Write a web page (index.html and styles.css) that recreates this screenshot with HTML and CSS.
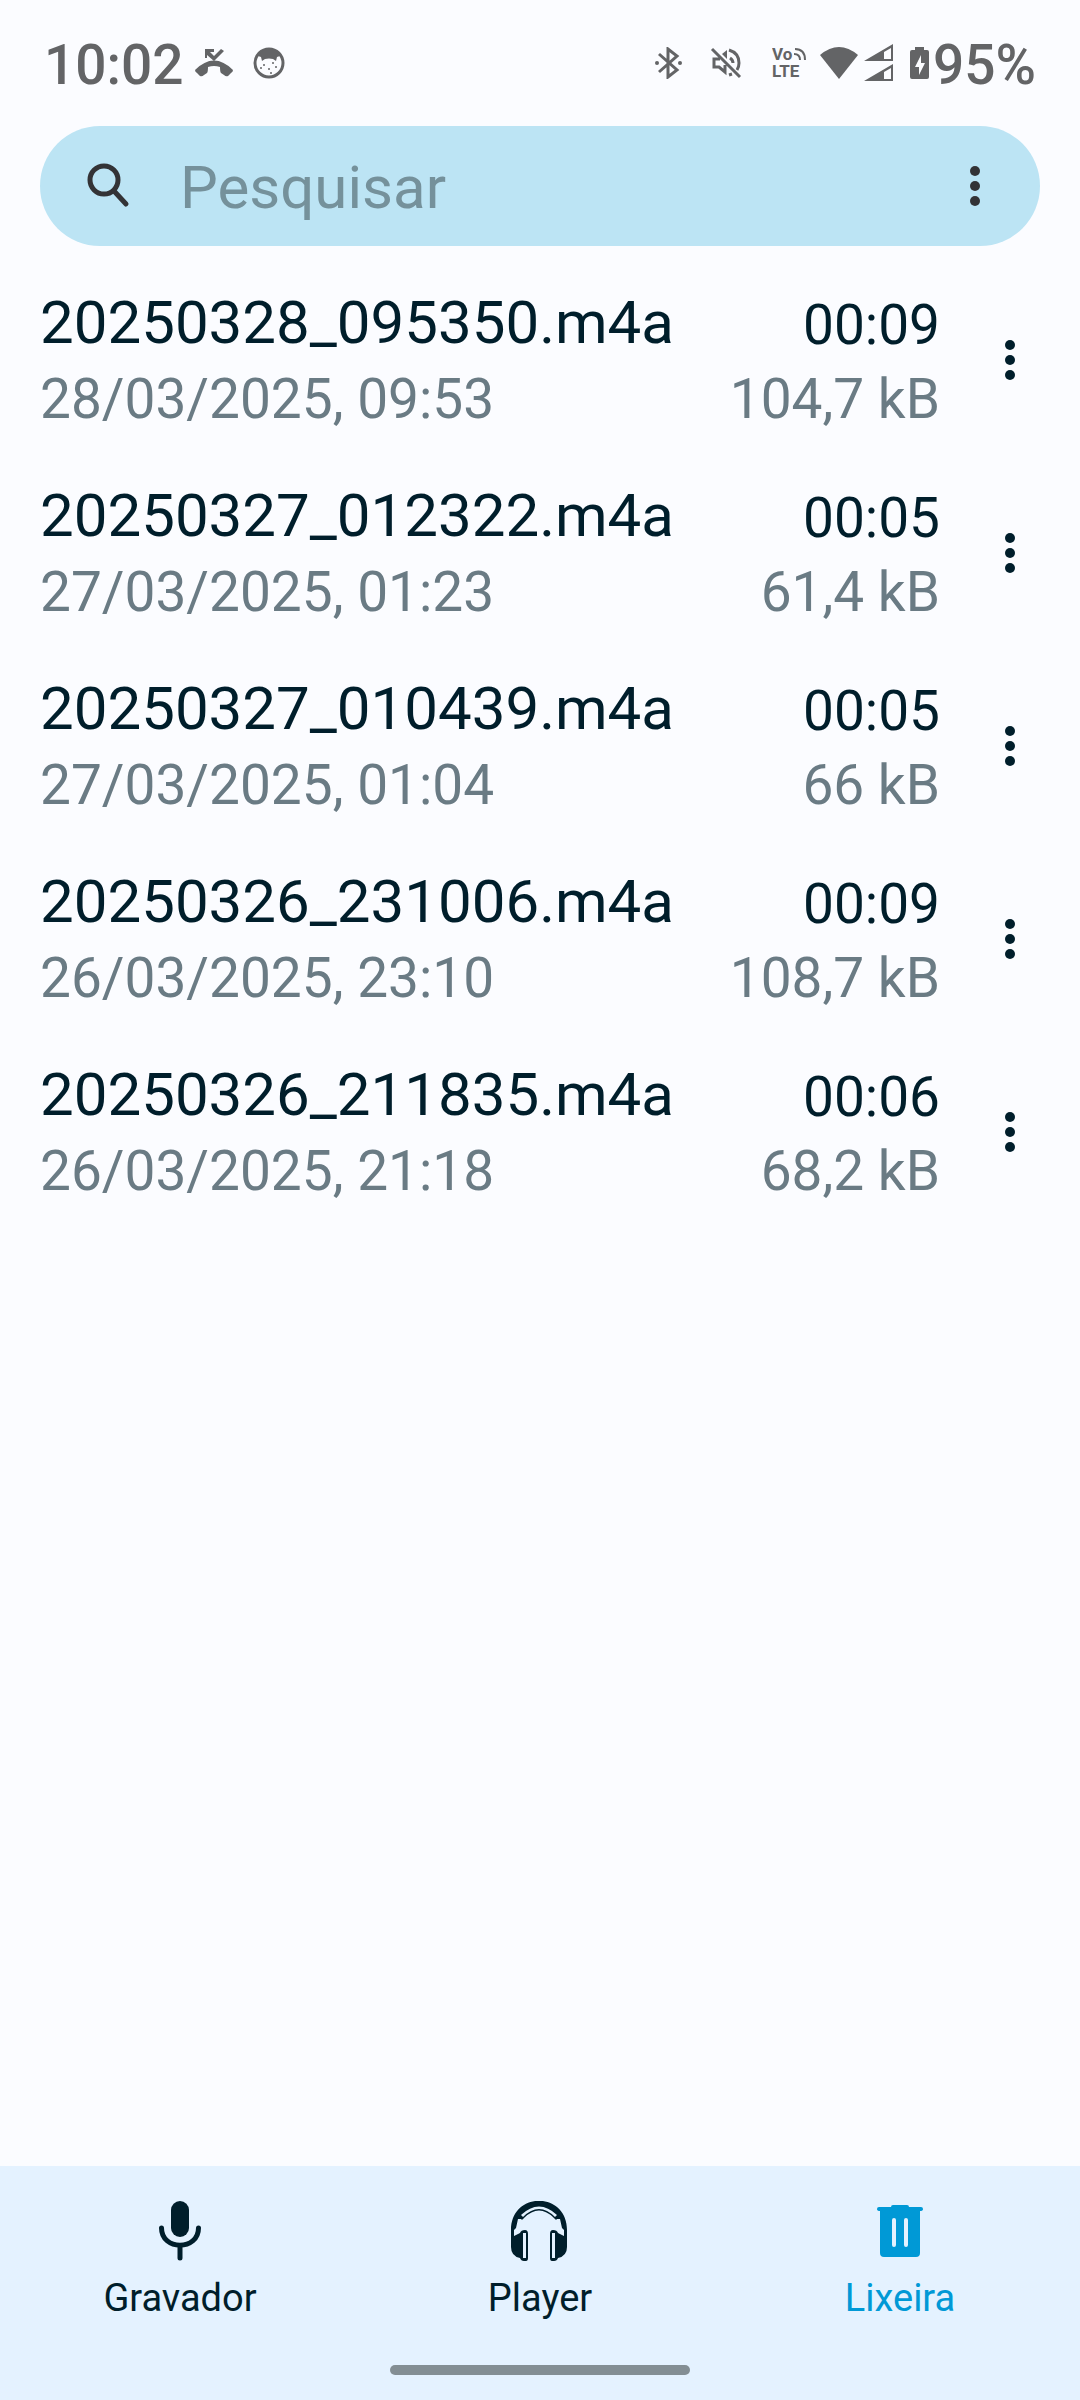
FILE: index.html
```html
<!DOCTYPE html>
<html lang="pt-BR">
<head>
<meta charset="utf-8">
<meta name="viewport" content="width=device-width, initial-scale=1">
<title>Lixeira</title>
<link rel="stylesheet" href="styles.css">
</head>
<body>
<svg class="sprite" aria-hidden="true">
  <symbol id="dots" viewBox="0 0 10 40"><circle cx="5" cy="5" r="5"/><circle cx="5" cy="20" r="5"/><circle cx="5" cy="35" r="5"/></symbol>
</svg>

<header class="status">
  <div class="status-group">
    <span class="status-text">10:02</span>
    <svg class="call" width="38" height="32" viewBox="0 0 38 32" aria-label="Chamada perdida"><path d="M0 23Q19 4 38 23Q38 25 36 26L33 29Q31 30 29 28L26 26Q25 25 25 20Q19 18 13 20Q13 25 12 26L9 28Q7 30 5 29L2 26Q0 25 0 23Z"/><path d="M10 2H19V5H15L19 9L26 2L29 4L19 14L12 8V11H10Z"/></svg>
    <svg class="face" width="32" height="32" viewBox="0 0 32 32" aria-label="Notificação"><circle cx="16" cy="16" r="14" fill="none" stroke="currentColor" stroke-width="3"/><path d="M5 9Q9 2 16 2Q23 2 27 9L24 10L23 14L20 12Q16 11 12 12L9 14L8 10Z"/><g><circle cx="11" cy="18" r="1"/><circle cx="20" cy="16" r="1"/><circle cx="8" cy="21" r="1"/><circle cx="16" cy="22" r="1"/><circle cx="23" cy="20" r="1"/><circle cx="18" cy="26" r="1"/></g></svg>
  </div>
  <div class="status-group">
    <svg class="bluetooth" width="27" height="32" viewBox="0 0 27 32" aria-label="Bluetooth"><path d="M4 7L22 23L13 30V2L22 9L4 25" fill="none" stroke="currentColor" stroke-width="3"/><circle cx="2" cy="16" r="2"/><circle cx="25" cy="16" r="2"/></svg>
    <svg class="mute" width="32" height="32" viewBox="0 0 32 32" aria-label="Sem som"><path d="M2 2L30 30M10 12H4V20H9L15 25V18M19 3Q29 6 29 16Q29 20 27 23M19 28L22 27M20 11Q23 13 23 16" fill="none" stroke="currentColor" stroke-width="3"/><path d="M12 7L17 3V12Z"/></svg>
    <svg class="volte" width="34" height="44" viewBox="0 0 34 44" aria-label="VoLTE"><text x="0" y="19">Vo</text><text x="0" y="36">LTE</text><path d="M23 8Q33 8 33 19M22 13Q28 13 28 19" fill="none" stroke="currentColor" stroke-width="2"/></svg>
    <svg class="wifi" width="38" height="32" viewBox="0 0 38 32" aria-label="Wi-Fi"><path d="M0 8Q19-8 38 8L19 32Z"/></svg>
    <svg class="signal" width="30" height="38" viewBox="0 0 30 38" aria-label="Sinal"><path fill-rule="evenodd" d="M0 17L29 0V17ZM20 8V15H27V4ZM0 37L29 20V37ZM20 28V35H27V24Z"/></svg>
    <svg class="battery" width="19" height="32" viewBox="0 0 19 32" aria-label="Bateria carregando"><path fill-rule="evenodd" d="M5 0H14V3H17Q19 3 19 5V30Q19 32 17 32H2Q0 32 0 30V5Q0 3 2 3H5ZM11 8L5 20H9V28L15 16H11Z"/></svg>
    <span class="status-text">95%</span>
  </div>
</header>

<form class="search" role="search">
  <label class="search-label" for="q" aria-label="Pesquisar"><svg width="44" height="46" viewBox="0 0 44 46"><ellipse cx="17" cy="17" rx="14" ry="14" fill="none" stroke="currentColor" stroke-width="5"/><path d="M27 28L39 41" fill="none" stroke="currentColor" stroke-width="5" stroke-linecap="round"/></svg></label>
  <input id="q" class="search-input" type="text" placeholder="Pesquisar">
  <button class="more" type="button" aria-label="Mais opções"><svg width="10" height="40"><use href="#dots"/></svg></button>
</form>

<main class="main">
  <ul class="list">
    <li class="row"><div class="info"><span class="name">20250328_095350.m4a</span><span class="sub">28/03/2025, 09:53</span></div><div class="meta"><span class="time">00:09</span><span class="sub">104,7 kB</span></div><button class="more" type="button" aria-label="Opções"><svg width="10" height="40"><use href="#dots"/></svg></button></li>
    <li class="row"><div class="info"><span class="name">20250327_012322.m4a</span><span class="sub">27/03/2025, 01:23</span></div><div class="meta"><span class="time">00:05</span><span class="sub">61,4 kB</span></div><button class="more" type="button" aria-label="Opções"><svg width="10" height="40"><use href="#dots"/></svg></button></li>
    <li class="row"><div class="info"><span class="name">20250327_010439.m4a</span><span class="sub">27/03/2025, 01:04</span></div><div class="meta"><span class="time">00:05</span><span class="sub">66 kB</span></div><button class="more" type="button" aria-label="Opções"><svg width="10" height="40"><use href="#dots"/></svg></button></li>
    <li class="row"><div class="info"><span class="name">20250326_231006.m4a</span><span class="sub">26/03/2025, 23:10</span></div><div class="meta"><span class="time">00:09</span><span class="sub">108,7 kB</span></div><button class="more" type="button" aria-label="Opções"><svg width="10" height="40"><use href="#dots"/></svg></button></li>
    <li class="row"><div class="info"><span class="name">20250326_211835.m4a</span><span class="sub">26/03/2025, 21:18</span></div><div class="meta"><span class="time">00:06</span><span class="sub">68,2 kB</span></div><button class="more" type="button" aria-label="Opções"><svg width="10" height="40"><use href="#dots"/></svg></button></li>
  </ul>
</main>

<footer class="footer">
  <nav class="tabs">
    <a class="tab" href="#gravador"><svg width="60" height="60" viewBox="0 0 60 60"><rect x="21" y="0" width="18" height="36" rx="9"/><path d="M11.500 27C11.500 50 48.500 50 48.500 27M30 46V57" fill="none" stroke="currentColor" stroke-width="5" stroke-linecap="round"/></svg><span>Gravador</span></a>
    <a class="tab" href="#player"><svg width="60" height="60" viewBox="0 0 60 60"><path fill-rule="evenodd" d="M1 29C1-10 57-10 57 29V46Q57 55 48 57Q47 60 44 60H42Q40 60 40 57V33Q40 29 43 29Q47 29 48 32L54 35V29L52 27L50 18H47Q46 20 44 17Q29 2 14 17Q12 20 11 18H8L6 27L4 29V35L10 32Q11 29 15 29Q18 29 18 33V57Q18 60 16 60H14Q11 60 10 57Q1 55 1 46ZM11 14L13 16Q29 0 45 16L47 14Q29-3 11 14ZM13 32V57H16V32ZM42 32V57H45V32Z"/></svg><span>Player</span></a>
    <a class="tab active" href="#lixeira" aria-current="page"><svg width="60" height="60" viewBox="0 0 60 60"><path fill-rule="evenodd" d="M23 4H37Q39 4 39 6H51Q53 6 53 8Q53 10 50 10V52Q50 56 46 56H14Q10 56 10 52V10Q7 10 7 8Q7 6 9 6H21Q21 4 23 4ZM24 17Q22 17 22 19V44Q22 46 24 46Q26 46 26 44V19Q26 17 24 17ZM36 17Q34 17 34 19V44Q34 46 36 46Q38 46 38 44V19Q38 17 36 17Z"/></svg><span>Lixeira</span></a>
  </nav>
  <div class="home-bar"></div>
</footer>
</body>
</html>
```
FILE: styles.css
```css
* { box-sizing: border-box; }

body {
  margin: 0;
  min-height: 100vh;
  display: flex;
  flex-direction: column;
  background: #fbfcff;
  color: #001e2b;
  font-family: Roboto, "Liberation Sans", sans-serif;
}

svg { display: block; fill: currentColor; flex: none; }
.sprite { position: absolute; width: 0; height: 0; }

.status {
  height: 126px;
  padding: 0 44px;
  display: flex;
  align-items: center;
  justify-content: space-between;
  color: #636466;
}
.status-group { display: flex; align-items: center; }
.status-text { font-size: 55px; line-height: 64px; font-weight: 500; padding-top: 4px; }
.call { margin-left: 11px; }
.face { margin-left: 20px; }
.mute { margin-left: 28px; }
.volte { margin-left: 30px; font: 700 17px Roboto, sans-serif; }
.wifi { margin-left: 14px; }
.signal { margin-left: 6px; }
.battery { margin: 0 4px 0 16px; }

.search {
  height: 120px;
  margin: 0 40px;
  padding: 0 20px 0 47px;
  display: flex;
  align-items: center;
  border-radius: 60px;
  background: #bce4f4;
  color: #333336;
}
.search-input {
  flex: 1;
  min-width: 0;
  margin-left: 49px;
  padding: 4px 0 0;
  border: 0;
  outline: 0;
  background: none;
  color: #001e2b;
  font: 60px/72px Roboto, "Liberation Sans", sans-serif;
}
.search-input::placeholder { color: #75919b; opacity: 1; }

.more {
  width: 90px;
  height: 90px;
  padding: 0;
  display: grid;
  place-items: center;
  border: 0;
  background: none;
  color: inherit;
}

.main { flex: 1; }
.list { margin: 0; padding: 17px 25px 0 40px; list-style: none; }
.row { height: 193px; display: flex; align-items: center; }
.info, .meta { display: flex; flex-direction: column; }
.info { flex: 1; min-width: 0; gap: 2px; padding-top: 2px; }
.meta { align-items: flex-end; margin-right: 25px; padding-top: 4px; }
.name { font-size: 60px; line-height: 74px; }
.time, .sub { font-size: 55px; line-height: 74px; }
.sub { color: #6a7b84; }

.footer { background: #e4f2ff; padding: 35px 0 25px; }
.tabs { display: flex; }
.tab {
  flex: 1;
  display: flex;
  flex-direction: column;
  align-items: center;
  gap: 15px;
  color: #001e2b;
  font-size: 38px;
  line-height: 44px;
  text-decoration: none;
}
.active { color: #0099d6; }
.home-bar { width: 300px; height: 10px; margin: 45px auto 0; border-radius: 5px; background: #838e94; }
```
